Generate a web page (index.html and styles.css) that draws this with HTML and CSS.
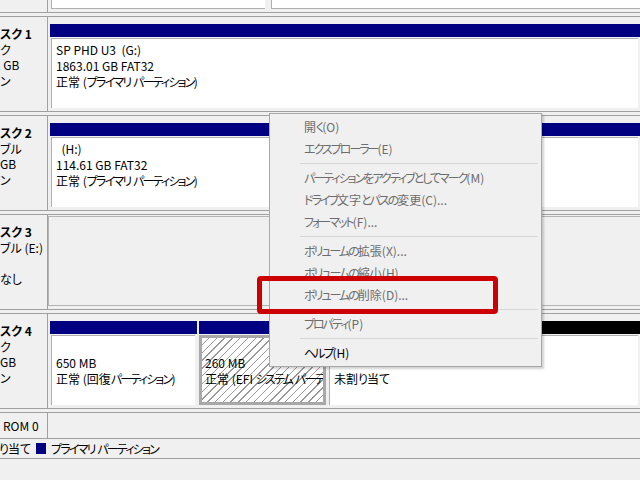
FILE: index.html
```html
<!DOCTYPE html>
<html lang="ja">
<head>
<meta charset="utf-8">
<title>ディスクの管理</title>
<link rel="stylesheet" href="styles.css">
</head>
<body>
<div class="screen">
  <div class="row row-top">
    <div class="label"></div>
    <div class="panel panel-top">
      <div class="part p-top1"><div class="box"></div></div>
      <div class="part p-fill"><div class="box"></div></div>
    </div>
  </div>

  <div class="row">
    <div class="label">
      <div class="l bold">スク 1</div>
      <div class="l">ク</div>
      <div class="l cut">1 GB</div>
      <div class="l">ン</div>
    </div>
    <div class="panel">
      <div class="part p-fill">
        <div class="bar"></div>
        <div class="box">
          <div class="t">SP PHD U3&nbsp; (G:)</div>
          <div class="t">1863.01 GB FAT32</div>
          <div class="t">正常 (<span class="kn">プライマリ</span> <span class="kn">パーティション</span>)</div>
        </div>
      </div>
    </div>
  </div>

  <div class="row">
    <div class="label">
      <div class="l bold">スク 2</div>
      <div class="l">ブル</div>
      <div class="l">GB</div>
      <div class="l">ン</div>
    </div>
    <div class="panel">
      <div class="part p-fill">
        <div class="bar"></div>
        <div class="box">
          <div class="t">&nbsp; (H:)</div>
          <div class="t">114.61 GB FAT32</div>
          <div class="t">正常 (<span class="kn">プライマリ</span> <span class="kn">パーティション</span>)</div>
        </div>
      </div>
    </div>
  </div>

  <div class="row">
    <div class="label">
      <div class="l bold">スク 3</div>
      <div class="l">ブル (E:)</div>
      <div class="l">&nbsp;</div>
      <div class="l">なし</div>
    </div>
    <div class="panel panel-empty">
      <div class="empty"></div>
    </div>
  </div>

  <div class="row">
    <div class="label">
      <div class="l bold">スク 4</div>
      <div class="l">ク</div>
      <div class="l">GB</div>
      <div class="l">ン</div>
    </div>
    <div class="panel">
      <div class="part p-rec">
        <div class="bar"></div>
        <div class="box">
          <div class="t">&nbsp;</div>
          <div class="t">650 MB</div>
          <div class="t">正常 (回復<span class="kn">パーティション</span>)</div>
        </div>
      </div>
      <div class="part p-efi">
        <div class="bar"></div>
        <div class="box box-sel">
          <div class="t">&nbsp;</div>
          <div class="t">260 MB</div>
          <div class="t">正常 (EFI <span class="kn">システム</span> <span class="kn">パーティション</span>)</div>
        </div>
      </div>
      <div class="part p-fill">
        <div class="bar bar-black"></div>
        <div class="box">
          <div class="t">&nbsp;</div>
          <div class="t">&nbsp;</div>
          <div class="t">未割<span class="kn-s">り</span>当<span class="kn-s">て</span></div>
        </div>
      </div>
    </div>
  </div>

  <div class="row row-cd">
    <div class="label">
      <div class="l cd">ROM 0</div>
    </div>
    <div class="panel"></div>
  </div>

  <div class="legend">
    <span class="lg-text cutl"><span class="kn-s">り</span>当<span class="kn-s">て</span></span>
    <span class="swatch"></span>
    <span class="lg-text"><span class="kn">プライマリ</span> <span class="kn">パーティション</span></span>
  </div>
</div>

<div class="menu">
  <div class="mi">開<span class="kn">く</span>(O)</div>
  <div class="mi"><span class="kn">エクスプローラー</span>(E)</div>
  <div class="sep"></div>
  <div class="mi"><span class="kn">パーティションをアクティブとしてマーク</span>(M)</div>
  <div class="mi"><span class="kn">ドライブ</span>文字<span class="kn">とパスの</span>変更(C)...</div>
  <div class="mi"><span class="kn">フォーマット</span>(F)...</div>
  <div class="sep"></div>
  <div class="mi"><span class="kn">ボリュームの</span>拡張(X)...</div>
  <div class="mi"><span class="kn">ボリュームの</span>縮小(H)...</div>
  <div class="mi"><span class="kn">ボリュームの</span>削除(D)...</div>
  <div class="sep"></div>
  <div class="mi"><span class="kn">プロパティ</span>(P)</div>
  <div class="sep"></div>
  <div class="mi enabled"><span class="kn">ヘルプ</span>(H)</div>
</div>

<div class="callout"></div>
</body>
</html>
```

FILE: styles.css
```css
html, body {
  margin: 0;
  padding: 0;
  background: #f0f0f0;
}
body {
  width: 640px;
  height: 480px;
  overflow: hidden;
  position: relative;
  font-family: "Noto Sans CJK JP", "Noto Sans", sans-serif;
  font-feature-settings: "palt";
  font-size: 12px;
  color: #000;
}
.screen {
  width: 640px;
}
.row {
  display: flex;
  border-top: 1px solid #a0a0a0;
  border-bottom: 1px solid #a0a0a0;
  margin-bottom: 3px;
  height: 94px;
}
.row-top {
  border-top: none;
  height: 12px;
}
.row-cd {
  height: 25px;
  margin-bottom: 0;
}
.label {
  width: 48px;
  flex: none;
  border-right: 1px solid #a0a0a0;
  overflow: hidden;
  padding-top: 9px;
  box-sizing: border-box;
  white-space: nowrap;
}
.row-top .label { padding-top: 0; }
.row-cd .label { padding-top: 5px; }
.l {
  line-height: 15.5px;
  height: 15.5px;
}
.bold { font-weight: bold; }
.cut { margin-left: -6px; }
.cd { padding-left: 3px; }
.panel {
  flex: 1;
  display: flex;
  padding: 7px 0 3px 2px;
  box-sizing: border-box;
  overflow: hidden;
  min-width: 0;
}
.panel-top {
  padding: 0 0 0 2px;
}
.panel-empty {
  padding: 1px 0 3px 0;
}
.empty {
  flex: 1;
  border: 1px solid #b4b4b4;
  border-right: none;
}
.part {
  display: flex;
  flex-direction: column;
  margin-right: 2px;
  min-width: 0;
}
.p-top1 { width: 215px; margin-right: 5px; }
.p-fill { flex: 1; margin-right: 0; }
.p-rec { width: 147px; }
.p-efi { width: 127px; margin-right: 2px; }
.bar {
  height: 13px;
  background: #000080;
  flex: none;
}
.bar-black { background: #000; }
.box {
  flex: 1;
  background: #fff;
  margin: 1px 2px 0 1px;
  border-top: 1px solid #b0b0b0;
  border-left: 1px solid #b0b0b0;
  padding: 3px 0 0 4px;
  overflow: hidden;
  white-space: nowrap;
}
.panel-top .box {
  margin: 0 0 3px 1px;
  border-top: none;
  border-bottom: 1px solid #b0b0b0;
  padding: 0;
}
.box-sel {
  margin: 1px 0 0 0;
  border: 3px solid #a8a8a8;
  padding: 1px 0 0 3px;
  background: repeating-linear-gradient(135deg, #ffffff 0 4.5px, #9a9a9a 4.5px 5.5px);
}
.t {
  line-height: 16px;
  height: 16px;
  overflow: hidden;
}
.kn { letter-spacing: -1.8px; }
.kn-s { letter-spacing: -1px; }
.legend {
  display: flex;
  align-items: center;
  height: 19px;
  border-bottom: 1px solid #a0a0a0;
  white-space: nowrap;
}
.lg-text {
  line-height: 19px;
}
.cutl { margin-left: -1px; }
.swatch {
  width: 10px;
  height: 11px;
  background: #000080;
  margin: 0 5px 0 6px;
  flex: none;
}
.menu {
  position: absolute;
  left: 269px;
  top: 113px;
  width: 271px;
  background: #f0f0f0;
  border: 1px solid #a8a8a8;
  padding: 2px 0;
  box-shadow: 2px 2px 2px rgba(0, 0, 0, 0.18);
}
.mi {
  height: 22px;
  line-height: 22px;
  padding-left: 34px;
  color: #6d6d6d;
  white-space: nowrap;
}
.mi .kn { letter-spacing: -2px; }
.mi.enabled { color: #000; }
.sep {
  height: 1px;
  background: #d7d7d7;
  margin: 3px 3px 3px 30px;
}
.callout {
  position: absolute;
  left: 257px;
  top: 276px;
  width: 231px;
  height: 28px;
  border: 5px solid #cc0000;
  border-radius: 4px;
}
```
